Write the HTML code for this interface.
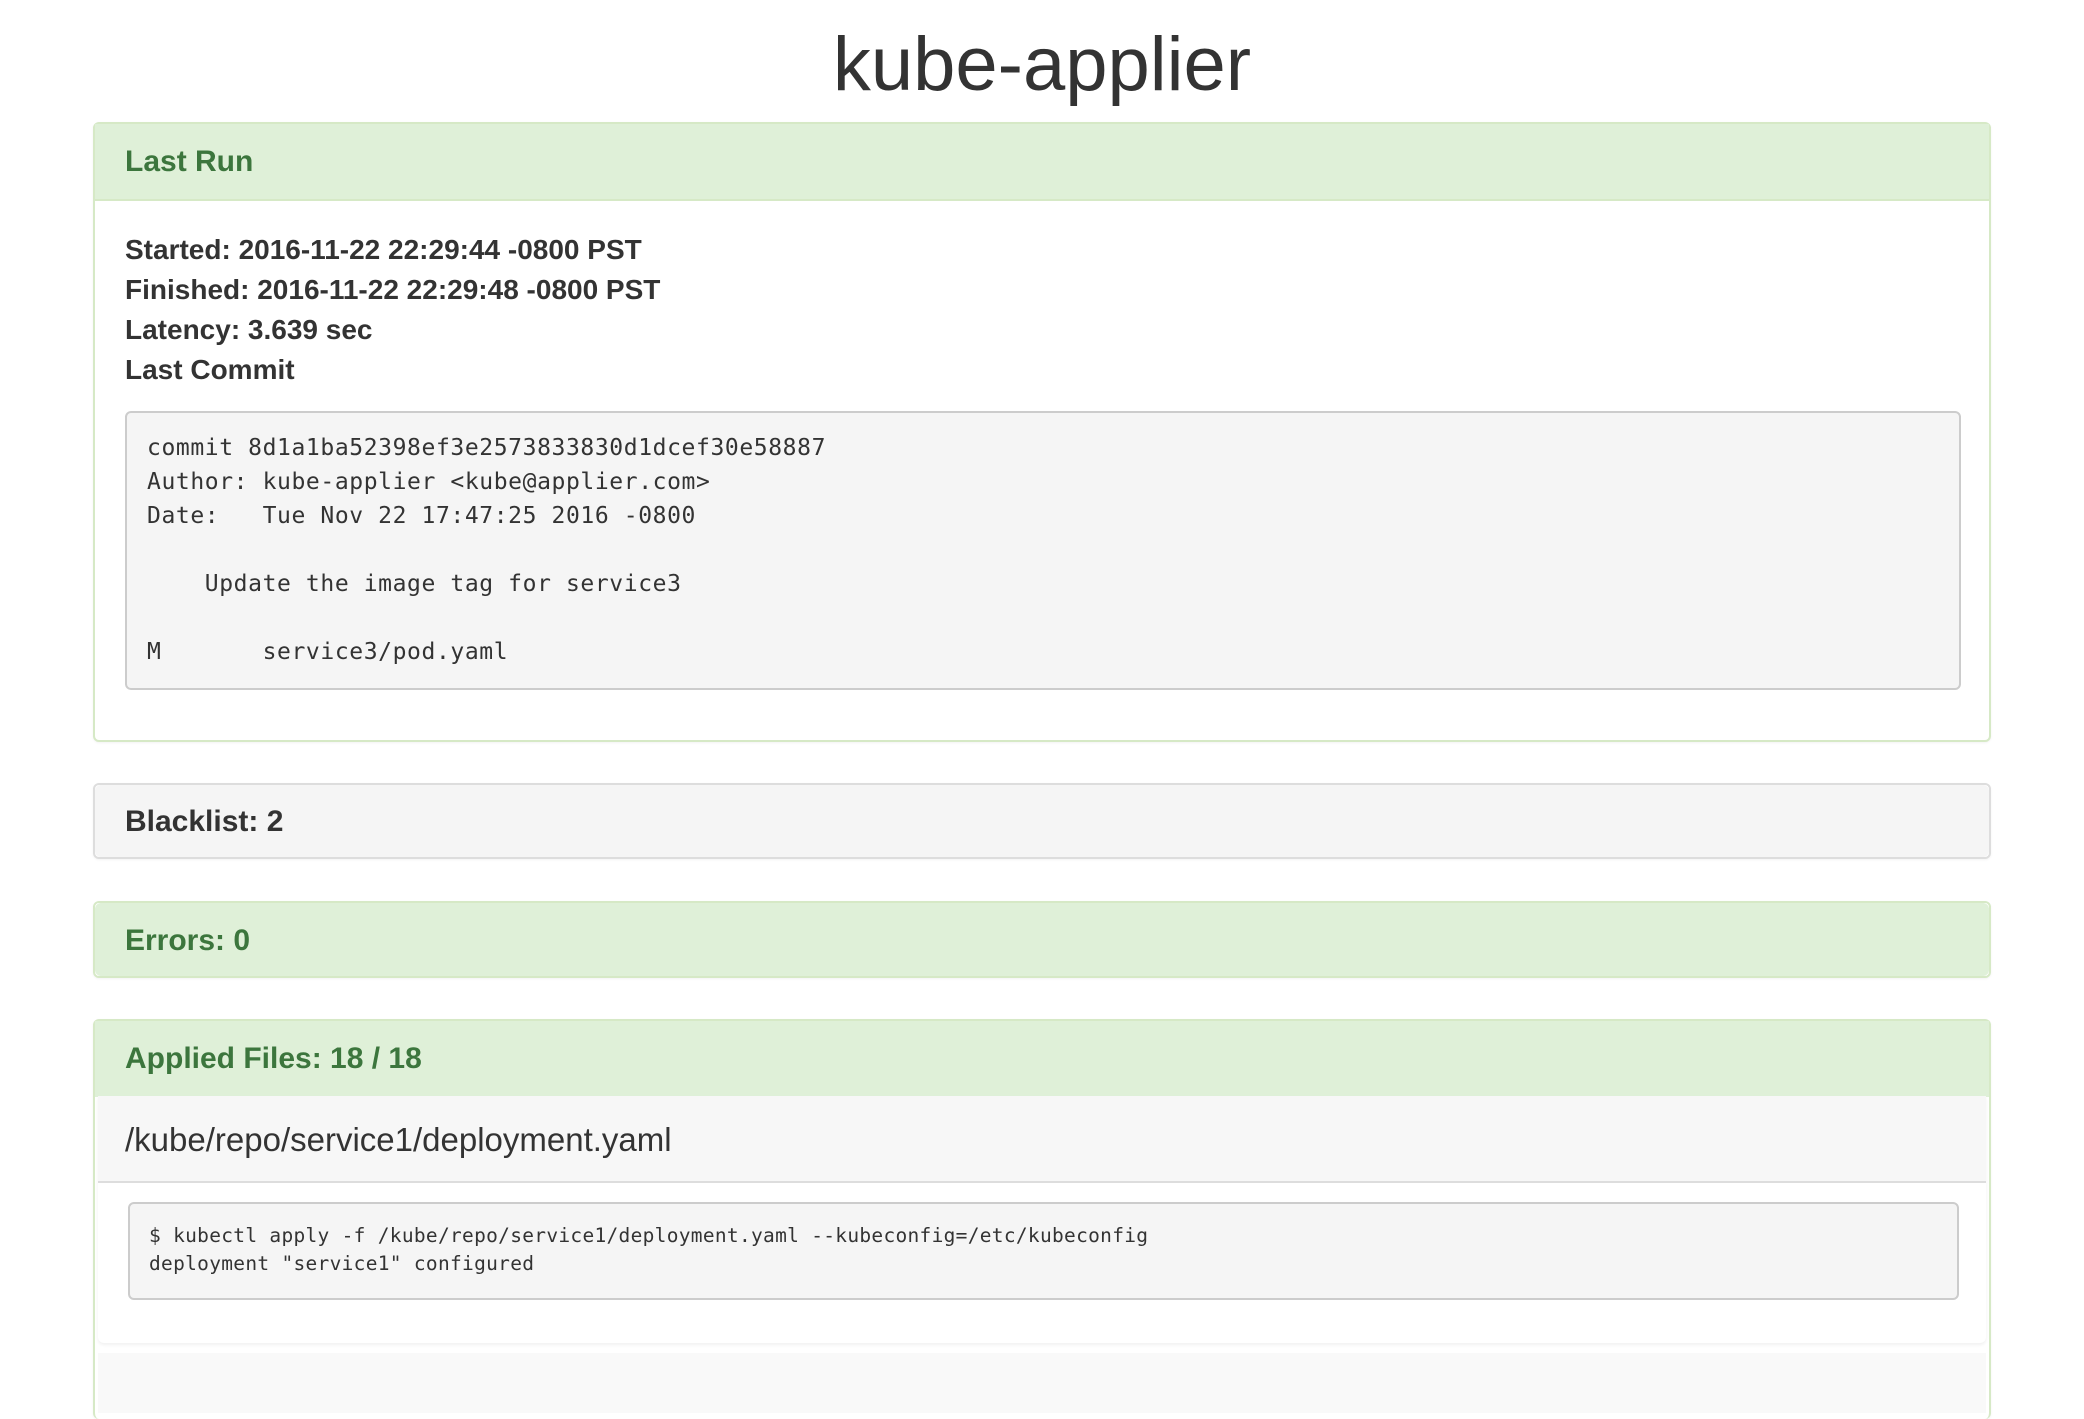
<!DOCTYPE html>
<html><head><meta charset="utf-8"><style>
*{box-sizing:border-box;margin:0;padding:0}
body{width:2084px;height:1368px;overflow:hidden;background:#fff;font-family:"Liberation Sans",Arial,sans-serif;color:#333;position:relative}
.a{position:absolute}
h1{position:absolute;left:0;width:2084px;text-align:center;top:20px;font-size:76px;font-weight:500;line-height:90px;color:#333;}
.panel{position:absolute;left:93px;width:1898px;border:2px solid #d6e9c6;border-radius:6px;background:#fff;box-shadow:0 1px 2px rgba(0,0,0,.05)}
.ph{background:#dff0d8;color:#3c763d;font-size:30px;font-weight:bold;padding:0 30px;border-bottom:2px solid #d6e9c6}
.gray{border-color:#ddd}
.gray .ph{background:#f5f5f5;color:#333;border-bottom:none}
pre{font-family:"DejaVu Sans Mono","Liberation Mono",monospace;background:#f5f5f5;border:2px solid #ccc;border-radius:6px;color:#333}
.b{font-weight:bold;font-size:28px;line-height:40px}
</style></head><body>
<h1>kube-applier</h1>

<div class="panel" style="top:122px;height:620px">
  <div class="ph" style="height:77px;line-height:75px">Last Run</div>
  <div class="a b" style="left:30px;top:106px">Started: 2016-11-22 22:29:44 -0800 PST<br>Finished: 2016-11-22 22:29:48 -0800 PST<br>Latency: 3.639 sec<br>Last Commit</div>
  <pre class="a" style="left:30px;top:287px;width:1836px;height:279px;font-size:23px;line-height:34px;padding:18px 20px 0;letter-spacing:0.6px">commit 8d1a1ba52398ef3e2573833830d1dcef30e58887
Author: kube-applier &lt;kube@applier.com&gt;
Date:   Tue Nov 22 17:47:25 2016 -0800

    Update the image tag for service3

M       service3/pod.yaml</pre>
</div>

<div class="panel gray" style="top:783px;height:76px">
  <div class="ph" style="height:72px;line-height:74px;border-radius:6px">Blacklist: 2</div>
</div>

<div class="panel" style="top:901px;height:77px">
  <div class="ph" style="height:73px;line-height:75px;border-bottom:none;border-radius:6px">Errors: 0</div>
</div>

<div class="panel" style="top:1019px;height:400px;border-bottom:none">
  <div class="ph" style="height:76px;line-height:76px;border-bottom:none">Applied Files: 18 / 18</div>
  <div class="a" style="left:3px;top:75px;width:1888px;height:247px;background:#fff;border-radius:0 0 6px 6px;box-shadow:0 2px 3px rgba(0,0,0,.06)">
    <div style="height:87px;background:#f7f7f7;border-bottom:2px solid #ddd;font-size:33px;line-height:88px;padding-left:27px">/kube/repo/service1/deployment.yaml</div>
    <pre class="a" style="left:30px;top:106px;width:1831px;height:98px;font-size:19.5px;line-height:28px;padding:18px 19px 0;letter-spacing:0.3px">$ kubectl apply -f /kube/repo/service1/deployment.yaml --kubeconfig=/etc/kubeconfig
deployment "service1" configured</pre>
  </div>
  <div class="a" style="left:3px;top:332px;width:1888px;height:60px;background:#f9f9f9"></div>
</div>
</body></html>
